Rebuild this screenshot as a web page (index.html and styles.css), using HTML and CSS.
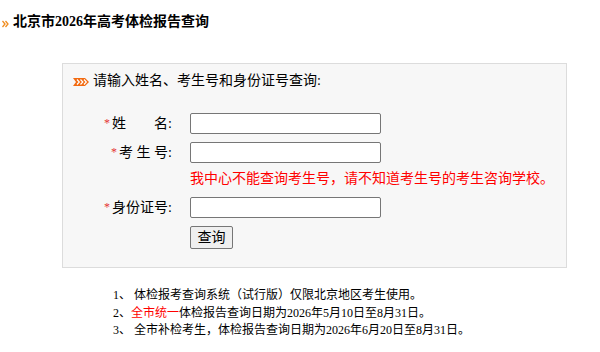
FILE: index.html
```html
<!DOCTYPE html>
<html lang="zh-CN">
<head>
<meta charset="utf-8">
<title>北京市2026年高考体检报告查询</title>
<link rel="stylesheet" href="styles.css">
</head>
<body>
<h1 class="title">
  <svg class="title-icon" width="7" height="8" viewBox="0 0 7 8"><polyline points="0.5,1 3,4 0.5,7" fill="none" stroke="#f08c1e" stroke-width="1.3"/><polyline points="3.5,1 6,4 3.5,7" fill="none" stroke="#f08c1e" stroke-width="1.3"/></svg>
  <span>北京市2026年高考体检报告查询</span>
</h1>
<div class="box">
  <div class="box-head">
    <svg class="head-icon" width="16" height="8" viewBox="0 0 16 8"><polygon points="0,0 12,0 16,4 12,8 0,8 3,4" fill="#f26a10"/><polyline points="4,1.5 6.3,4 4,6.5" fill="none" stroke="#fff" stroke-width="1.2"/><polyline points="7.5,1.5 9.8,4 7.5,6.5" fill="none" stroke="#fff" stroke-width="1.2"/><polyline points="11,1.5 13.3,4 11,6.5" fill="none" stroke="#fff" stroke-width="1.2"/></svg>
    <span>请输入姓名、考生号和身份证号查询:</span>
  </div>
  <form class="form">
    <div class="row">
      <label class="label"><span class="star">*</span>姓　　名:</label>
      <input class="field" type="text">
    </div>
    <div class="row">
      <label class="label"><span class="star">*</span>考 生 号:</label>
      <input class="field" type="text">
    </div>
    <div class="row msg-row">
      <span class="label"></span>
      <span class="msg">我中心不能查询考生号，请不知道考生号的考生咨询学校。</span>
    </div>
    <div class="row">
      <label class="label"><span class="star">*</span>身份证号:</label>
      <input class="field" type="text">
    </div>
    <div class="row btn-row">
      <span class="label"></span>
      <button class="btn" type="button">查询</button>
    </div>
  </form>
</div>
<ul class="notes">
  <li>1、 体检报考查询系统（试行版）仅限北京地区考生使用。</li>
  <li>2、<span class="red">全市统一</span>体检报告查询日期为2026年5月10日至8月31日。</li>
  <li>3、 全市补检考生，体检报告查询日期为2026年6月20日至8月31日。</li>
</ul>
</body>
</html>
```
FILE: styles.css
```css
html, body {
  margin: 0;
  padding: 0;
  background: #fff;
}
body {
  font-family: "Liberation Serif", "Noto Sans CJK SC", serif;
  color: #000;
  font-size: 14px;
}
.title {
  margin: 0;
  padding: 12px 0 0 2px;
  display: flex;
  align-items: center;
  gap: 4px;
  font-size: 14px;
  line-height: 20px;
  font-weight: bold;
}
.title-icon {
  display: block;
  margin-top: 3px;
}
.box {
  margin: 31px 0 0 62px;
  width: 503px;
  border: 1px solid #dcdcdc;
  background: #f7f7f7;
  padding: 7px 0 18px 0;
}
.box-head {
  display: flex;
  align-items: center;
  gap: 4px;
  padding-left: 10px;
  line-height: 20px;
  font-size: 14px;
}
.head-icon {
  display: block;
  margin-top: 2px;
}
.form {
  margin: 22px 0 0 0;
  display: flex;
  flex-direction: column;
  gap: 8px;
}
.row {
  display: flex;
  align-items: center;
  gap: 18px;
  height: 21px;
}
.msg-row {
  height: 26px;
  margin-top: -8px;
  align-items: flex-end;
}
.btn-row {
  height: 23px;
}
.label {
  width: 109px;
  text-align: right;
  font-size: 14px;
  line-height: 20px;
  white-space: pre;
  flex: none;
}
.star {
  color: #e53333;
  font-size: 12px;
  margin-right: 2px;
  vertical-align: 1px;
}
.field {
  box-sizing: border-box;
  width: 191px;
  height: 21px;
  margin: 0;
  border: 1px solid #767676;
  border-radius: 2px;
  background: #fff;
  padding: 0 3px;
}
.msg {
  color: #ff0000;
  font-size: 14px;
  line-height: 20px;
}
.btn {
  box-sizing: border-box;
  width: 43px;
  height: 23px;
  margin: 0;
  padding: 0;
  border: 1px solid #767676;
  border-radius: 2px;
  background: #efefef;
  font-family: "Liberation Serif", "Noto Sans CJK SC", serif;
  font-size: 14px;
  color: #000;
  line-height: 21px;
}
.notes {
  list-style: none;
  margin: 19px 0 0 113px;
  padding: 0;
  font-size: 12px;
  line-height: 17.5px;
}
.red {
  color: #ff0000;
}
```
